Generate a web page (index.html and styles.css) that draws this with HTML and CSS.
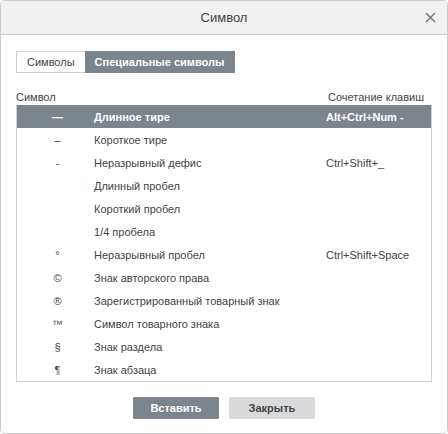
FILE: index.html
```html
<!DOCTYPE html>
<html lang="ru">
<head>
<meta charset="utf-8">
<title>Символ</title>
<link rel="stylesheet" href="styles.css">
</head>
<body>
<div class="dialog">
  <div class="header">
    <span></span>
    <span class="title">Символ</span>
    <span class="close"><svg width="11" height="11" viewBox="0 0 11 11"><path d="M1 1L10 10M10 1L1 10" stroke="#7a7a7a" stroke-width="1.5" fill="none"/></svg></span>
  </div>
  <div class="body">
    <div class="tabs">
      <div class="tab">Символы</div>
      <div class="tab active">Специальные символы</div>
    </div>
    <div class="labels">
      <span>Символ</span>
      <span>Сочетание клавиш</span>
    </div>
    <div class="table">
      <div class="row selected"><span class="sym">—</span><span class="name">Длинное тире</span><span class="key">Alt+Ctrl+Num -</span></div>
      <div class="row"><span class="sym">–</span><span class="name">Короткое тире</span><span class="key"></span></div>
      <div class="row"><span class="sym">-</span><span class="name">Неразрывный дефис</span><span class="key">Ctrl+Shift+_</span></div>
      <div class="row"><span class="sym"></span><span class="name">Длинный пробел</span><span class="key"></span></div>
      <div class="row"><span class="sym"></span><span class="name">Короткий пробел</span><span class="key"></span></div>
      <div class="row"><span class="sym"></span><span class="name">1/4 пробела</span><span class="key"></span></div>
      <div class="row"><span class="sym">°</span><span class="name">Неразрывный пробел</span><span class="key">Ctrl+Shift+Space</span></div>
      <div class="row"><span class="sym">©</span><span class="name">Знак авторского права</span><span class="key"></span></div>
      <div class="row"><span class="sym">®</span><span class="name">Зарегистрированный товарный знак</span><span class="key"></span></div>
      <div class="row"><span class="sym">™</span><span class="name">Символ товарного знака</span><span class="key"></span></div>
      <div class="row"><span class="sym">§</span><span class="name">Знак раздела</span><span class="key"></span></div>
      <div class="row"><span class="sym">¶</span><span class="name">Знак абзаца</span><span class="key"></span></div>
    </div>
    <div class="buttons">
      <button class="btn primary">Вставить</button>
      <button class="btn">Закрыть</button>
    </div>
  </div>
</div>
</body>
</html>
```
FILE: styles.css
```css
html, body {
  margin: 0;
  padding: 0;
  background: #ffffff;
}
body {
  font-family: "Liberation Sans", Arial, sans-serif;
  font-size: 11px;
  color: #444444;
}
.dialog {
  width: 448px;
  height: 434px;
  box-sizing: border-box;
  border: 1px solid #cbcbcb;
  border-radius: 5px;
  overflow: hidden;
  display: flex;
  flex-direction: column;
}
.header {
  height: 33px;
  border-bottom: 1px solid #cbcbcb;
  background: #f1f1f1;
  display: grid;
  grid-template-columns: 1fr auto 1fr;
  align-items: center;
}
.title {
  font-size: 13px;
  color: #444444;
}
.close {
  justify-self: end;
  margin-right: 11px;
  display: flex;
}
.body {
  padding: 16px 15px 0 15px;
  display: flex;
  flex-direction: column;
}
.tabs {
  display: flex;
}
.tab {
  height: 22px;
  box-sizing: border-box;
  border: 1px solid #cfcfcf;
  border-right: none;
  padding: 0 10px;
  line-height: 20px;
  color: #444444;
}
.tab.active {
  background: #7d858c;
  border-color: #7d858c;
  color: #ffffff;
  font-weight: bold;
  padding: 0 11px 0 9px;
}
.labels {
  margin-top: 16px;
  height: 16px;
  line-height: 16px;
  display: flex;
  justify-content: space-between;
  padding-right: 8px;
}
.table {
  border: 1px solid #cfcfcf;
  border-top: none;
  display: flex;
  flex-direction: column;
}
.row {
  height: 23px;
  display: flex;
  align-items: center;
}
.row.selected {
  background: #7d858c;
  color: #ffffff;
  font-weight: bold;
}
.sym {
  width: 77px;
  padding-left: 4px;
  box-sizing: border-box;
  text-align: center;
}
.name {
  width: 232px;
}
.key {
  flex: 1;
}
.buttons {
  margin-top: 15px;
  display: flex;
  justify-content: center;
  gap: 10px;
}
.btn {
  width: 86px;
  height: 22px;
  border: none;
  border-radius: 1px;
  background: #d8dadc;
  color: #444444;
  font-family: "Liberation Sans", Arial, sans-serif;
  font-size: 11px;
  font-weight: bold;
  padding: 0;
}
.btn.primary {
  background: #7d858c;
  color: #ffffff;
}
```
